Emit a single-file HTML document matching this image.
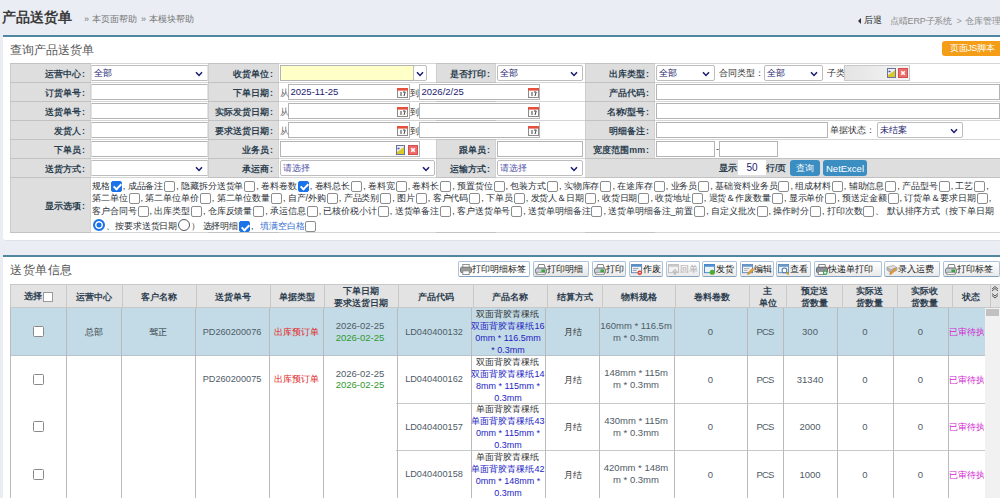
<!DOCTYPE html><html><head><meta charset="utf-8"><style>
html,body{margin:0;padding:0}
body{width:1000px;height:498px;overflow:hidden;position:relative;background:#eaedf3;font-family:"Liberation Sans",sans-serif;font-size:9px;color:#333}
.t{position:absolute;white-space:nowrap;line-height:1.2}
.c{position:absolute;display:flex;align-items:center;white-space:nowrap;box-sizing:border-box}
.sel{position:absolute;border:1px solid #bdbdbd;border-radius:2px;background:#fff;display:flex;align-items:center;padding-left:1.5px;box-sizing:content-box;font-size:9px;white-space:nowrap}
.sel i{position:absolute;right:4.5px;top:5px;line-height:0}
.sel span{position:relative;top:0.5px}
.inp{position:absolute;border:1px solid #b4b4b4;display:flex;align-items:center;padding-left:1.5px;font-size:9.5px;color:#1a1a6e;box-sizing:content-box;white-space:nowrap}
.cb{display:inline-block;width:11px;height:11px;border:1px solid #8c8c8c;border-radius:2px;background:#fff;vertical-align:-3px;margin:0 1px;box-sizing:border-box}
.cb.on{background:#1a73e8;border-color:#1a73e8;position:relative}
.cb.on:after{content:"";position:absolute;left:3px;top:0.5px;width:3px;height:6px;border:solid #fff;border-width:0 2px 2px 0;transform:rotate(45deg)}
.rd{display:inline-block;width:12px;height:12px;border:1px solid #555;border-radius:50%;background:#fff;vertical-align:-2px;margin:0 1px;box-sizing:border-box}
.rd.on{border:2px solid #1a73e8;box-shadow:inset 0 0 0 1.5px #fff;background:#1a73e8}
.btn{position:absolute;border:1px solid #adc3d8;border-bottom-color:#85a2bd;border-radius:2px;display:flex;align-items:center;font-size:8.7px;white-space:nowrap;padding-left:1px;box-sizing:content-box;overflow:visible}
.bi{display:inline-block;width:12px;height:10px;background:#7a9ab8;border-radius:1px;margin-right:2px}
</style></head><body>
<div class="t" style="left:2px;top:9px;font-size:14px;color:#3c3c3c;font-weight:bold;">产品送货单</div>
<div class="t" style="left:84px;top:14px;font-size:9px;color:#777;">&raquo; 本页面帮助</div>
<div class="t" style="left:141px;top:14px;font-size:9px;color:#777;">&raquo; 本模块帮助</div>
<div style="position:absolute;left:858px;top:18px;width:0;height:0;border-top:3px solid transparent;border-bottom:3px solid transparent;border-right:3px solid #333"></div>
<div class="t" style="left:864px;top:15px;font-size:9px;color:#222;">后退</div>
<div class="t" style="left:890px;top:15.5px;font-size:9px;color:#888;letter-spacing:-0.2px">点晴ERP子系统</div>
<div class="t" style="left:956.5px;top:15.5px;font-size:9px;color:#999;">&gt;</div>
<div class="t" style="left:964.5px;top:15.5px;font-size:9px;color:#888;">仓库管理</div>
<div style="position:absolute;left:3px;top:35px;width:1000px;height:205px;background:#fff;border-top:2px solid #4e879f;box-sizing:border-box;border-radius:0 0 3px 3px"></div>
<div style="position:absolute;left:5px;top:240px;width:995px;height:1px;background:#dfe2e7"></div>
<div class="t" style="left:10px;top:43px;font-size:12px;color:#555;">查询产品送货单</div>
<div class="c" style="left:942px;top:41px;width:62px;height:15px;background:#f39e16;border-radius:3px;color:#fff;font-size:9px;letter-spacing:-0.4px;justify-content:flex-start;padding-left:8px;box-sizing:border-box"><div>页面JS脚本</div></div>
<div style="position:absolute;left:10px;top:63px;width:990px;height:170px;background:#fff"></div>
<div style="position:absolute;left:10px;top:63px;width:81px;height:19px;background:#dedede;box-shadow:inset 1px 0 #cdcdcd, inset -1px 0 #d2d2d2"></div>
<div class="c" style="left:10px;top:63px;width:75px;height:19px;justify-content:flex-end;font-size:8.85px;color:#2c3e50;font-weight:bold;"><div style="position:relative;top:2px">运营中心<span style="margin-left:1px">:</span></div></div>
<div style="position:absolute;left:208px;top:63px;width:71px;height:19px;background:#dedede;box-shadow:inset 1px 0 #cdcdcd, inset -1px 0 #d2d2d2"></div>
<div class="c" style="left:208px;top:63px;width:65px;height:19px;justify-content:flex-end;font-size:8.85px;color:#2c3e50;font-weight:bold;"><div style="position:relative;top:2px">收货单位<span style="margin-left:1px">:</span></div></div>
<div style="position:absolute;left:436px;top:63px;width:60px;height:19px;background:#dedede;box-shadow:inset 1px 0 #cdcdcd, inset -1px 0 #d2d2d2"></div>
<div class="c" style="left:436px;top:63px;width:54px;height:19px;justify-content:flex-end;font-size:8.85px;color:#2c3e50;font-weight:bold;"><div style="position:relative;top:2px">是否打印<span style="margin-left:1px">:</span></div></div>
<div style="position:absolute;left:585px;top:63px;width:70px;height:19px;background:#dedede;box-shadow:inset 1px 0 #cdcdcd, inset -1px 0 #d2d2d2"></div>
<div class="c" style="left:585px;top:63px;width:64px;height:19px;justify-content:flex-end;font-size:8.85px;color:#2c3e50;font-weight:bold;"><div style="position:relative;top:2px">出库类型<span style="margin-left:1px">:</span></div></div>
<div style="position:absolute;left:10px;top:82px;width:81px;height:19px;background:#dedede;box-shadow:inset 1px 0 #cdcdcd, inset -1px 0 #d2d2d2"></div>
<div class="c" style="left:10px;top:82px;width:75px;height:19px;justify-content:flex-end;font-size:8.85px;color:#2c3e50;font-weight:bold;"><div style="position:relative;top:2px">订货单号<span style="margin-left:1px">:</span></div></div>
<div style="position:absolute;left:208px;top:82px;width:71px;height:19px;background:#dedede;box-shadow:inset 1px 0 #cdcdcd, inset -1px 0 #d2d2d2"></div>
<div class="c" style="left:208px;top:82px;width:65px;height:19px;justify-content:flex-end;font-size:8.85px;color:#2c3e50;font-weight:bold;"><div style="position:relative;top:2px">下单日期<span style="margin-left:1px">:</span></div></div>
<div style="position:absolute;left:585px;top:82px;width:70px;height:19px;background:#dedede;box-shadow:inset 1px 0 #cdcdcd, inset -1px 0 #d2d2d2"></div>
<div class="c" style="left:585px;top:82px;width:64px;height:19px;justify-content:flex-end;font-size:8.85px;color:#2c3e50;font-weight:bold;"><div style="position:relative;top:2px">产品代码<span style="margin-left:1px">:</span></div></div>
<div style="position:absolute;left:10px;top:101px;width:81px;height:19px;background:#dedede;box-shadow:inset 1px 0 #cdcdcd, inset -1px 0 #d2d2d2"></div>
<div class="c" style="left:10px;top:101px;width:75px;height:19px;justify-content:flex-end;font-size:8.85px;color:#2c3e50;font-weight:bold;"><div style="position:relative;top:2px">送货单号<span style="margin-left:1px">:</span></div></div>
<div style="position:absolute;left:208px;top:101px;width:71px;height:19px;background:#dedede;box-shadow:inset 1px 0 #cdcdcd, inset -1px 0 #d2d2d2"></div>
<div class="c" style="left:208px;top:101px;width:65px;height:19px;justify-content:flex-end;font-size:8.85px;color:#2c3e50;font-weight:bold;"><div style="position:relative;top:2px">实际发货日期<span style="margin-left:1px">:</span></div></div>
<div style="position:absolute;left:585px;top:101px;width:70px;height:19px;background:#dedede;box-shadow:inset 1px 0 #cdcdcd, inset -1px 0 #d2d2d2"></div>
<div class="c" style="left:585px;top:101px;width:64px;height:19px;justify-content:flex-end;font-size:8.85px;color:#2c3e50;font-weight:bold;"><div style="position:relative;top:2px">名称/型号<span style="margin-left:1px">:</span></div></div>
<div style="position:absolute;left:10px;top:120px;width:81px;height:19px;background:#dedede;box-shadow:inset 1px 0 #cdcdcd, inset -1px 0 #d2d2d2"></div>
<div class="c" style="left:10px;top:120px;width:75px;height:19px;justify-content:flex-end;font-size:8.85px;color:#2c3e50;font-weight:bold;"><div style="position:relative;top:2px">发货人<span style="margin-left:1px">:</span></div></div>
<div style="position:absolute;left:208px;top:120px;width:71px;height:19px;background:#dedede;box-shadow:inset 1px 0 #cdcdcd, inset -1px 0 #d2d2d2"></div>
<div class="c" style="left:208px;top:120px;width:65px;height:19px;justify-content:flex-end;font-size:8.85px;color:#2c3e50;font-weight:bold;"><div style="position:relative;top:2px">要求送货日期<span style="margin-left:1px">:</span></div></div>
<div style="position:absolute;left:585px;top:120px;width:70px;height:19px;background:#dedede;box-shadow:inset 1px 0 #cdcdcd, inset -1px 0 #d2d2d2"></div>
<div class="c" style="left:585px;top:120px;width:64px;height:19px;justify-content:flex-end;font-size:8.85px;color:#2c3e50;font-weight:bold;"><div style="position:relative;top:2px">明细备注<span style="margin-left:1px">:</span></div></div>
<div style="position:absolute;left:10px;top:139px;width:81px;height:19px;background:#dedede;box-shadow:inset 1px 0 #cdcdcd, inset -1px 0 #d2d2d2"></div>
<div class="c" style="left:10px;top:139px;width:75px;height:19px;justify-content:flex-end;font-size:8.85px;color:#2c3e50;font-weight:bold;"><div style="position:relative;top:2px">下单员<span style="margin-left:1px">:</span></div></div>
<div style="position:absolute;left:208px;top:139px;width:71px;height:19px;background:#dedede;box-shadow:inset 1px 0 #cdcdcd, inset -1px 0 #d2d2d2"></div>
<div class="c" style="left:208px;top:139px;width:65px;height:19px;justify-content:flex-end;font-size:8.85px;color:#2c3e50;font-weight:bold;"><div style="position:relative;top:2px">业务员<span style="margin-left:1px">:</span></div></div>
<div style="position:absolute;left:436px;top:139px;width:60px;height:19px;background:#dedede;box-shadow:inset 1px 0 #cdcdcd, inset -1px 0 #d2d2d2"></div>
<div class="c" style="left:436px;top:139px;width:54px;height:19px;justify-content:flex-end;font-size:8.85px;color:#2c3e50;font-weight:bold;"><div style="position:relative;top:2px">跟单员<span style="margin-left:1px">:</span></div></div>
<div style="position:absolute;left:585px;top:139px;width:70px;height:19px;background:#dedede;box-shadow:inset 1px 0 #cdcdcd, inset -1px 0 #d2d2d2"></div>
<div class="c" style="left:585px;top:139px;width:64px;height:19px;justify-content:flex-end;font-size:8.85px;color:#2c3e50;font-weight:bold;"><div style="position:relative;top:2px">宽度范围mm<span style="margin-left:1px">:</span></div></div>
<div style="position:absolute;left:10px;top:158px;width:81px;height:19px;background:#dedede;box-shadow:inset 1px 0 #cdcdcd, inset -1px 0 #d2d2d2"></div>
<div class="c" style="left:10px;top:158px;width:75px;height:19px;justify-content:flex-end;font-size:8.85px;color:#2c3e50;font-weight:bold;"><div style="position:relative;top:2px">送货方式<span style="margin-left:1px">:</span></div></div>
<div style="position:absolute;left:208px;top:158px;width:71px;height:19px;background:#dedede;box-shadow:inset 1px 0 #cdcdcd, inset -1px 0 #d2d2d2"></div>
<div class="c" style="left:208px;top:158px;width:65px;height:19px;justify-content:flex-end;font-size:8.85px;color:#2c3e50;font-weight:bold;"><div style="position:relative;top:2px">承运商<span style="margin-left:1px">:</span></div></div>
<div style="position:absolute;left:436px;top:158px;width:60px;height:19px;background:#dedede;box-shadow:inset 1px 0 #cdcdcd, inset -1px 0 #d2d2d2"></div>
<div class="c" style="left:436px;top:158px;width:54px;height:19px;justify-content:flex-end;font-size:8.85px;color:#2c3e50;font-weight:bold;"><div style="position:relative;top:2px">运输方式<span style="margin-left:1px">:</span></div></div>
<div style="position:absolute;left:10px;top:177px;width:81px;height:55px;background:#dedede;box-shadow:inset 1px 0 #cdcdcd, inset -1px 0 #d2d2d2"></div>
<div class="c" style="left:10px;top:177px;width:75px;height:55px;justify-content:flex-end;font-size:8.85px;color:#2c3e50;font-weight:bold;"><div style="position:relative;top:2px">显示选项<span style="margin-left:1px">:</span></div></div>
<div style="position:absolute;left:585px;top:158px;width:415px;height:19px;background:#dedede"></div>
<div style="position:absolute;left:10px;top:63px;width:990px;height:1px;background:#d6d6d6"></div>
<div style="position:absolute;left:10px;top:82px;width:990px;height:1px;background:#d6d6d6"></div>
<div style="position:absolute;left:10px;top:101px;width:990px;height:1px;background:#d6d6d6"></div>
<div style="position:absolute;left:10px;top:120px;width:990px;height:1px;background:#d6d6d6"></div>
<div style="position:absolute;left:10px;top:139px;width:990px;height:1px;background:#d6d6d6"></div>
<div style="position:absolute;left:10px;top:158px;width:990px;height:1px;background:#d6d6d6"></div>
<div style="position:absolute;left:10px;top:177px;width:990px;height:1px;background:#d6d6d6"></div>
<div style="position:absolute;left:10px;top:232px;width:990px;height:1px;background:#d6d6d6"></div>
<div style="position:absolute;left:10px;top:63px;width:81px;height:1px;background:#c2c2c2"></div>
<div style="position:absolute;left:208px;top:63px;width:71px;height:1px;background:#c2c2c2"></div>
<div style="position:absolute;left:436px;top:63px;width:60px;height:1px;background:#c2c2c2"></div>
<div style="position:absolute;left:585px;top:63px;width:70px;height:1px;background:#c2c2c2"></div>
<div style="position:absolute;left:10px;top:82px;width:81px;height:1px;background:#c2c2c2"></div>
<div style="position:absolute;left:208px;top:82px;width:71px;height:1px;background:#c2c2c2"></div>
<div style="position:absolute;left:436px;top:82px;width:60px;height:1px;background:#c2c2c2"></div>
<div style="position:absolute;left:585px;top:82px;width:70px;height:1px;background:#c2c2c2"></div>
<div style="position:absolute;left:10px;top:101px;width:81px;height:1px;background:#c2c2c2"></div>
<div style="position:absolute;left:208px;top:101px;width:71px;height:1px;background:#c2c2c2"></div>
<div style="position:absolute;left:436px;top:101px;width:60px;height:1px;background:#c2c2c2"></div>
<div style="position:absolute;left:585px;top:101px;width:70px;height:1px;background:#c2c2c2"></div>
<div style="position:absolute;left:10px;top:120px;width:81px;height:1px;background:#c2c2c2"></div>
<div style="position:absolute;left:208px;top:120px;width:71px;height:1px;background:#c2c2c2"></div>
<div style="position:absolute;left:436px;top:120px;width:60px;height:1px;background:#c2c2c2"></div>
<div style="position:absolute;left:585px;top:120px;width:70px;height:1px;background:#c2c2c2"></div>
<div style="position:absolute;left:10px;top:139px;width:81px;height:1px;background:#c2c2c2"></div>
<div style="position:absolute;left:208px;top:139px;width:71px;height:1px;background:#c2c2c2"></div>
<div style="position:absolute;left:436px;top:139px;width:60px;height:1px;background:#c2c2c2"></div>
<div style="position:absolute;left:585px;top:139px;width:70px;height:1px;background:#c2c2c2"></div>
<div style="position:absolute;left:10px;top:158px;width:81px;height:1px;background:#c2c2c2"></div>
<div style="position:absolute;left:208px;top:158px;width:71px;height:1px;background:#c2c2c2"></div>
<div style="position:absolute;left:436px;top:158px;width:60px;height:1px;background:#c2c2c2"></div>
<div style="position:absolute;left:585px;top:158px;width:70px;height:1px;background:#c2c2c2"></div>
<div style="position:absolute;left:10px;top:177px;width:81px;height:1px;background:#c2c2c2"></div>
<div style="position:absolute;left:208px;top:177px;width:71px;height:1px;background:#c2c2c2"></div>
<div style="position:absolute;left:436px;top:177px;width:60px;height:1px;background:#c2c2c2"></div>
<div style="position:absolute;left:585px;top:177px;width:70px;height:1px;background:#c2c2c2"></div>
<div style="position:absolute;left:10px;top:232px;width:81px;height:1px;background:#c2c2c2"></div>
<div style="position:absolute;left:208px;top:232px;width:71px;height:1px;background:#c2c2c2"></div>
<div style="position:absolute;left:436px;top:232px;width:60px;height:1px;background:#c2c2c2"></div>
<div style="position:absolute;left:585px;top:232px;width:70px;height:1px;background:#c2c2c2"></div>
<div style="position:absolute;left:586px;top:158px;width:414px;height:1px;background:#c2c2c2"></div>
<div style="position:absolute;left:586px;top:177px;width:414px;height:1px;background:#c2c2c2"></div>
<div class="sel" style="left:91px;top:65px;width:113.5px;height:14px;border-left-color:#e2e2e2;border-right-color:#e2e2e2;border-radius:0"><span style="color:#1a1a6e">全部</span><i><svg width="8" height="6" viewBox="0 0 8 6"><path d="M1 1.2 L4 4.4 L7 1.2" fill="none" stroke="#1a1a6e" stroke-width="1.5"/></svg></i></div>
<div class="inp" style="left:280px;top:65px;width:130px;height:14px;background:#ffffc8;"></div>
<div class="sel" style="left:413px;top:65px;width:12px;height:14px;justify-content:center;padding:0"><i style="right:2px"><svg width="8" height="6" viewBox="0 0 8 6"><path d="M1 1.2 L4 4.4 L7 1.2" fill="none" stroke="#1a1a6e" stroke-width="1.5"/></svg></i></div>
<div class="sel" style="left:497px;top:65px;width:82.5px;height:14px;"><span style="color:#1a1a6e">全部</span><i><svg width="8" height="6" viewBox="0 0 8 6"><path d="M1 1.2 L4 4.4 L7 1.2" fill="none" stroke="#1a1a6e" stroke-width="1.5"/></svg></i></div>
<div class="sel" style="left:656px;top:65px;width:55.5px;height:14px;"><span style="color:#1a1a6e">全部</span><i><svg width="8" height="6" viewBox="0 0 8 6"><path d="M1 1.2 L4 4.4 L7 1.2" fill="none" stroke="#1a1a6e" stroke-width="1.5"/></svg></i></div>
<div class="t" style="left:719px;top:68px;font-size:8.85px;color:#333;">合同类型：</div>
<div class="sel" style="left:764px;top:65px;width:55.5px;height:14px;"><span style="color:#1a1a6e">全部</span><i><svg width="8" height="6" viewBox="0 0 8 6"><path d="M1 1.2 L4 4.4 L7 1.2" fill="none" stroke="#1a1a6e" stroke-width="1.5"/></svg></i></div>
<div class="t" style="left:827px;top:68px;font-size:8.85px;color:#333;">子类</div>
<div class="inp" style="left:844px;top:65px;width:62px;height:14px;background:linear-gradient(90deg,#e4e4e4,#f4f4f4);border-color:#c8c8c8"></div>
<div style="position:absolute;left:887px;top:68px;line-height:0"><svg width="9" height="10" viewBox="0 0 9 10"><rect x="0.5" y="0.5" width="8" height="9" fill="#eef0f6" stroke="#6a72a0"/><path d="M1 9 L1 7 L4 5 L8 2 V9Z" fill="#d8c828"/><path d="M1.5 3.5h2" stroke="#4050a0" stroke-width="1.5"/></svg></div>
<div style="position:absolute;left:898px;top:68px;line-height:0"><svg width="10" height="10" viewBox="0 0 10 10"><rect x="0.5" y="0.5" width="9" height="9" fill="#f06a6a" stroke="#d05050"/><path d="M3.2 3.2 L6.8 6.8 M6.8 3.2 L3.2 6.8" stroke="#fff" stroke-width="1.6"/></svg></div>
<div class="inp" style="left:91px;top:84px;width:113px;height:14px;background:#fff;border-left-color:#e2e2e2;border-right-color:#e2e2e2"></div>
<div class="inp" style="left:288px;top:84px;width:118px;height:14px;background:#fff;"><span style="position:relative;top:-0.5px">2025-11-25</span></div>
<div class="t" style="left:279.5px;top:87.5px;font-size:8.5px;color:#666;">从</div>
<div style="position:absolute;left:397px;top:87.5px;line-height:0"><svg width="11" height="10" viewBox="0 0 11 10"><rect x="0.5" y="0.5" width="10" height="9" fill="#fafafa" stroke="#8c8c8c"/><rect x="0" y="0" width="11" height="2.6" fill="#e5503c"/><path d="M4 4v4M6 4h2.2l-1.2 4" fill="none" stroke="#444" stroke-width="1"/></svg></div>
<div class="t" style="left:410px;top:87.5px;font-size:8.5px;color:#333;">到</div>
<div class="inp" style="left:419px;top:84px;width:117px;height:14px;background:#fff;"><span style="position:relative;top:-0.5px">2026/2/25</span></div>
<div style="position:absolute;left:528px;top:87.5px;line-height:0"><svg width="11" height="10" viewBox="0 0 11 10"><rect x="0.5" y="0.5" width="10" height="9" fill="#fafafa" stroke="#8c8c8c"/><rect x="0" y="0" width="11" height="2.6" fill="#e5503c"/><path d="M4 4v4M6 4h2.2l-1.2 4" fill="none" stroke="#444" stroke-width="1"/></svg></div>
<div class="inp" style="left:656px;top:84px;width:340px;height:14px;background:#fff;"></div>
<div class="inp" style="left:91px;top:103px;width:113px;height:14px;background:#fff;border-left-color:#e2e2e2;border-right-color:#e2e2e2"></div>
<div class="inp" style="left:288px;top:103px;width:118px;height:14px;background:#fff;"><span style="position:relative;top:-0.5px"></span></div>
<div class="t" style="left:279.5px;top:106.5px;font-size:8.5px;color:#666;">从</div>
<div style="position:absolute;left:397px;top:106.5px;line-height:0"><svg width="11" height="10" viewBox="0 0 11 10"><rect x="0.5" y="0.5" width="10" height="9" fill="#fafafa" stroke="#8c8c8c"/><rect x="0" y="0" width="11" height="2.6" fill="#e5503c"/><path d="M4 4v4M6 4h2.2l-1.2 4" fill="none" stroke="#444" stroke-width="1"/></svg></div>
<div class="t" style="left:410px;top:106.5px;font-size:8.5px;color:#333;">到</div>
<div class="inp" style="left:419px;top:103px;width:117px;height:14px;background:#fff;"><span style="position:relative;top:-0.5px"></span></div>
<div style="position:absolute;left:528px;top:106.5px;line-height:0"><svg width="11" height="10" viewBox="0 0 11 10"><rect x="0.5" y="0.5" width="10" height="9" fill="#fafafa" stroke="#8c8c8c"/><rect x="0" y="0" width="11" height="2.6" fill="#e5503c"/><path d="M4 4v4M6 4h2.2l-1.2 4" fill="none" stroke="#444" stroke-width="1"/></svg></div>
<div class="inp" style="left:656px;top:103px;width:340px;height:14px;background:#fff;"></div>
<div class="inp" style="left:91px;top:122px;width:113px;height:14px;background:#fff;border-left-color:#e2e2e2;border-right-color:#e2e2e2"></div>
<div class="inp" style="left:288px;top:122px;width:118px;height:14px;background:#fff;"><span style="position:relative;top:-0.5px"></span></div>
<div class="t" style="left:279.5px;top:125.5px;font-size:8.5px;color:#666;">从</div>
<div style="position:absolute;left:397px;top:125.5px;line-height:0"><svg width="11" height="10" viewBox="0 0 11 10"><rect x="0.5" y="0.5" width="10" height="9" fill="#fafafa" stroke="#8c8c8c"/><rect x="0" y="0" width="11" height="2.6" fill="#e5503c"/><path d="M4 4v4M6 4h2.2l-1.2 4" fill="none" stroke="#444" stroke-width="1"/></svg></div>
<div class="t" style="left:410px;top:125.5px;font-size:8.5px;color:#333;">到</div>
<div class="inp" style="left:419px;top:122px;width:117px;height:14px;background:#fff;"><span style="position:relative;top:-0.5px"></span></div>
<div style="position:absolute;left:528px;top:125.5px;line-height:0"><svg width="11" height="10" viewBox="0 0 11 10"><rect x="0.5" y="0.5" width="10" height="9" fill="#fafafa" stroke="#8c8c8c"/><rect x="0" y="0" width="11" height="2.6" fill="#e5503c"/><path d="M4 4v4M6 4h2.2l-1.2 4" fill="none" stroke="#444" stroke-width="1"/></svg></div>
<div class="inp" style="left:656px;top:122px;width:168px;height:14px;background:#fff;"></div>
<div class="t" style="left:830px;top:125px;font-size:8.85px;color:#333;">单据状态：</div>
<div class="sel" style="left:877px;top:122px;width:82.5px;height:14px;"><span style="color:#1a1a6e">未结案</span><i><svg width="8" height="6" viewBox="0 0 8 6"><path d="M1 1.2 L4 4.4 L7 1.2" fill="none" stroke="#1a1a6e" stroke-width="1.5"/></svg></i></div>
<div class="inp" style="left:91px;top:141px;width:113px;height:14px;background:#fff;border-left-color:#e2e2e2;border-right-color:#e2e2e2"></div>
<div class="inp" style="left:280px;top:141px;width:136px;height:14px;background:#fff;"></div>
<div style="position:absolute;left:395.5px;top:145px;line-height:0"><svg width="9" height="10" viewBox="0 0 9 10"><rect x="0.5" y="0.5" width="8" height="9" fill="#eef0f6" stroke="#6a72a0"/><path d="M1 9 L1 7 L4 5 L8 2 V9Z" fill="#d8c828"/><path d="M1.5 3.5h2" stroke="#4050a0" stroke-width="1.5"/></svg></div>
<div style="position:absolute;left:408px;top:145px;line-height:0"><svg width="10" height="10" viewBox="0 0 10 10"><rect x="0.5" y="0.5" width="9" height="9" fill="#f06a6a" stroke="#d05050"/><path d="M3.2 3.2 L6.8 6.8 M6.8 3.2 L3.2 6.8" stroke="#fff" stroke-width="1.6"/></svg></div>
<div class="inp" style="left:497px;top:141px;width:82px;height:14px;background:#fff;"></div>
<div class="inp" style="left:656px;top:141px;width:55px;height:14px;background:#fff;"></div>
<div class="t" style="left:716px;top:143.5px;font-size:9px;color:#333;">-</div>
<div class="inp" style="left:719px;top:141px;width:55px;height:14px;background:#fff;"></div>
<div class="sel" style="left:91px;top:160px;width:113.5px;height:14px;border-left-color:#e2e2e2;border-right-color:#e2e2e2;border-radius:0"><span style="color:#1a1a6e"></span><i><svg width="8" height="6" viewBox="0 0 8 6"><path d="M1 1.2 L4 4.4 L7 1.2" fill="none" stroke="#1a1a6e" stroke-width="1.5"/></svg></i></div>
<div class="sel" style="left:280px;top:160px;width:151.5px;height:14px;"><span style="color:#5555aa">请选择</span><i><svg width="8" height="6" viewBox="0 0 8 6"><path d="M1 1.2 L4 4.4 L7 1.2" fill="none" stroke="#1a1a6e" stroke-width="1.5"/></svg></i></div>
<div class="sel" style="left:497px;top:160px;width:82.5px;height:14px;"><span style="color:#5555aa">请选择</span><i><svg width="8" height="6" viewBox="0 0 8 6"><path d="M1 1.2 L4 4.4 L7 1.2" fill="none" stroke="#1a1a6e" stroke-width="1.5"/></svg></i></div>
<div class="t" style="left:719px;top:163px;font-size:8.85px;color:#2c3e50;font-weight:bold;">显示</div>
<div class="c" style="left:738px;top:160px;width:28px;height:15px;background:#fff;justify-content:center;color:#1a1a6e;font-size:10px"><div>50</div></div>
<div class="t" style="left:766px;top:163px;font-size:8.85px;color:#2c3e50;font-weight:bold;">行/页</div>
<div class="c" style="left:790px;top:160px;width:30px;height:16px;background:#3b8ec2;border-radius:3px;color:#fff;font-size:9px;justify-content:center"><div>查询</div></div>
<div class="c" style="left:823px;top:160px;width:44px;height:16px;background:#3b8ec2;border-radius:3px;color:#fff;font-size:9.5px;justify-content:center"><div>NetExcel</div></div>
<div class="t" style="left:92px;top:180.5px;font-size:9px;color:#2a2f36;letter-spacing:-0.1px">规格<b class="cb on"></b>, 成品备注<b class="cb"></b>, 隐藏拆分送货单<b class="cb"></b>, 卷料卷数<b class="cb on"></b>, 卷料总长<b class="cb"></b>, 卷料宽<b class="cb"></b>, 卷料长<b class="cb"></b>, 预置货位<b class="cb"></b>, 包装方式<b class="cb"></b>, 实物库存<b class="cb"></b>, 在途库存<b class="cb"></b>, 业务员<b class="cb"></b>, 基础资料业务员<b class="cb"></b>, 组成材料<b class="cb"></b>, 辅助信息<b class="cb"></b>, 产品型号<b class="cb"></b>, 工艺<b class="cb"></b>,</div>
<div class="t" style="left:92px;top:193px;font-size:9px;color:#2a2f36;letter-spacing:-0.1px">第二单位<b class="cb"></b>, 第二单位单价<b class="cb"></b>, 第二单位数量<b class="cb"></b>, 自产/外购<b class="cb"></b>, 产品类别<b class="cb"></b>, 图片<b class="cb"></b>, 客户代码<b class="cb"></b>, 下单员<b class="cb"></b>, 发货人＆日期<b class="cb"></b>, 收货日期<b class="cb"></b>, 收货地址<b class="cb"></b>, 退货＆作废数量<b class="cb"></b>, 显示单价<b class="cb"></b>, 预送定金额<b class="cb"></b>, 订货单＆要求日期<b class="cb"></b>,</div>
<div class="t" style="left:92px;top:206px;font-size:9px;color:#2a2f36;letter-spacing:-0.1px">客户合同号<b class="cb"></b>, 出库类型<b class="cb"></b>, 仓库反馈量<b class="cb"></b>, 承运信息<b class="cb"></b>, 已核价税小计<b class="cb"></b>, 送货单备注<b class="cb"></b>, 客户送货单号<b class="cb"></b>, 送货单明细备注<b class="cb"></b>, 送货单明细备注_前置<b class="cb"></b>, 自定义批次<b class="cb"></b>, 操作时分<b class="cb"></b>, 打印次数<b class="cb"></b>、 默认排序方式（按下单日期</div>
<div class="t" style="left:92px;top:219px;font-size:9px;color:#2a2f36;letter-spacing:-0.1px"><b class="rd on"></b>、按要求送货日期<b class="rd"></b>） 选择明细<b class="cb on"></b>, <span style="color:#3a6fd0;margin-left:4px">填满空白格</span><b class="cb"></b></div>
<div style="position:absolute;left:3px;top:255px;width:1000px;height:250px;background:#fff;border-top:2px solid #4e879f;box-sizing:border-box"></div>
<div class="t" style="left:10px;top:263px;font-size:12px;color:#555;letter-spacing:0.5px">送货单信息</div>
<div class="btn" style="left:458px;top:261px;width:69px;height:14px;color:#151515;background:linear-gradient(#fff,#fff)"><svg width="12" height="11" viewBox="0 0 13 12" style="flex:none;margin-right:0"><rect x="3" y="0.5" width="7" height="4" fill="#fff" stroke="#8a8a8a"/><rect x="0.5" y="3.5" width="12" height="6" rx="1.5" fill="#9a9a9a" stroke="#6e6e6e"/><rect x="3" y="7.5" width="7" height="4" fill="#fff" stroke="#8a8a8a"/></svg><span style="position:relative;top:0.5px">打印明细标签</span></div>
<div class="btn" style="left:532.5px;top:261px;width:53.5px;height:14px;color:#151515;background:linear-gradient(#fff,#e4e4e4)"><svg width="12" height="11" viewBox="0 0 13 12" style="flex:none;margin-right:0"><path d="M4 0.5h6l1 4h-8z" fill="#fff" stroke="#777"/><rect x="0.5" y="4.5" width="12" height="6" rx="2" fill="#c9ced6" stroke="#6f7680"/><rect x="2" y="9" width="9" height="2.5" fill="#f4f4f4" stroke="#888" stroke-width="0.8"/><rect x="7" y="6" width="4" height="3" fill="#3aa53a"/></svg><span style="position:relative;top:0.5px">打印明细</span></div>
<div class="btn" style="left:592px;top:261px;width:31px;height:14px;color:#151515;background:linear-gradient(#fff,#e9e9e9)"><svg width="12" height="11" viewBox="0 0 13 12" style="flex:none;margin-right:0"><path d="M4 0.5h6l1 4h-8z" fill="#fff" stroke="#777"/><rect x="0.5" y="4.5" width="12" height="6" rx="2" fill="#c9ced6" stroke="#6f7680"/><rect x="2" y="9" width="9" height="2.5" fill="#f4f4f4" stroke="#888" stroke-width="0.8"/><rect x="7" y="6" width="4" height="3" fill="#3aa53a"/></svg><span style="position:relative;top:0.5px">打印</span></div>
<div class="btn" style="left:628.5px;top:261px;width:31.5px;height:14px;color:#151515;background:linear-gradient(#fff,#e9e9e9)"><svg width="12" height="11" viewBox="0 0 13 12" style="flex:none;margin-right:0"><rect x="0.5" y="0.5" width="11" height="9" fill="#eef3f8" stroke="#5a86b5"/><rect x="0.5" y="0.5" width="11" height="2.5" fill="#5a8fc8"/><path d="M2 5h6M2 7h4" stroke="#999"/><circle cx="9.5" cy="9.5" r="2.5" fill="#e23b2e"/><path d="M8.3 9.5h2.4" stroke="#fff"/></svg><span style="position:relative;top:0.5px">作废</span></div>
<div class="btn" style="left:666px;top:261px;width:31px;height:14px;color:#aaa;background:linear-gradient(#fff,#e9e9e9)"><svg width="12" height="11" viewBox="0 0 13 12" style="flex:none;margin-right:0"><rect x="0.5" y="0.5" width="11" height="9" fill="#f2f2f2" stroke="#bbb"/><rect x="0.5" y="0.5" width="11" height="2.5" fill="#c8c8c8"/><path d="M7 11.5v-3h-2l2.5-3 2.5 3h-2v3z" fill="#ddd" stroke="#aaa" stroke-width="0.7"/></svg><span style="position:relative;top:0.5px">回单</span></div>
<div class="btn" style="left:702px;top:261px;width:32px;height:14px;color:#151515;background:linear-gradient(#fff,#e9e9e9)"><svg width="12" height="11" viewBox="0 0 13 12" style="flex:none;margin-right:0"><rect x="0.5" y="0.5" width="11" height="9" fill="#eaf2fa" stroke="#3f7fc0"/><rect x="0.5" y="0.5" width="11" height="2.5" fill="#4d8fd0"/><circle cx="9" cy="9" r="2.8" fill="#4cad2e"/></svg><span style="position:relative;top:0.5px">发货</span></div>
<div class="btn" style="left:740px;top:261px;width:31px;height:14px;color:#151515;background:linear-gradient(#fff,#e9e9e9)"><svg width="12" height="11" viewBox="0 0 13 12" style="flex:none;margin-right:0"><rect x="0.5" y="0.5" width="11" height="9" fill="#eef3f8" stroke="#5a86b5"/><rect x="0.5" y="0.5" width="11" height="2.5" fill="#6a98c8"/><path d="M2 5h6M2 7h4" stroke="#aaa"/><path d="M6 11.5l1-2.5 4.5-4.5 1.5 1.5-4.5 4.5z" fill="#f0a030" stroke="#b0701a" stroke-width="0.6"/></svg><span style="position:relative;top:0.5px">编辑</span></div>
<div class="btn" style="left:776px;top:261px;width:32px;height:14px;color:#151515;background:linear-gradient(#fff,#e9e9e9)"><svg width="12" height="11" viewBox="0 0 13 12" style="flex:none;margin-right:0"><rect x="0.5" y="0.5" width="11" height="9" fill="#eef3f8" stroke="#5a86b5"/><rect x="0.5" y="0.5" width="11" height="2.5" fill="#6a98c8"/><circle cx="7" cy="7" r="2.6" fill="#fff" stroke="#4a7ab0" stroke-width="1.1"/><path d="M9 9l2.5 2.5" stroke="#d08a20" stroke-width="1.6"/></svg><span style="position:relative;top:0.5px">查看</span></div>
<div class="btn" style="left:813.5px;top:261px;width:65.5px;height:14px;color:#151515;background:linear-gradient(#fff,#e9e9e9)"><svg width="12" height="11" viewBox="0 0 13 12" style="flex:none;margin-right:0"><path d="M3 0.5h7v3.5h-7z" fill="#fff" stroke="#777"/><rect x="0.5" y="3.5" width="12" height="6" rx="1.5" fill="#8c9199" stroke="#5d636b"/><rect x="2.5" y="8" width="6" height="3.5" fill="#fff" stroke="#888"/><circle cx="10" cy="9.5" r="2.5" fill="#2fa84f"/><path d="M8.6 9.5h2.8M10 8.1v2.8" stroke="#fff" stroke-width="1"/></svg><span style="position:relative;top:0.5px">快递单打印</span></div>
<div class="btn" style="left:884px;top:261px;width:53px;height:14px;color:#151515;background:linear-gradient(#fff,#e9e9e9)"><svg width="12" height="11" viewBox="0 0 13 12" style="flex:none;margin-right:0"><path d="M1 3.5 L8 1.5 L12 4 L5 7z" fill="#ddd" stroke="#999" stroke-width="0.7"/><path d="M1 3.5v3l4 3v-3z" fill="#bbb" stroke="#999" stroke-width="0.7"/><path d="M5 9.5v-3l7-2.5v3z" fill="#ccc" stroke="#999" stroke-width="0.7"/><path d="M4 11.5l1-2.5 4.5-4.5 1.5 1.5-4.5 4.5z" fill="#f0a030" stroke="#b0701a" stroke-width="0.6"/></svg><span style="position:relative;top:0.5px">录入运费</span></div>
<div class="btn" style="left:943px;top:261px;width:54px;height:14px;color:#151515;background:linear-gradient(#fff,#e9e9e9)"><svg width="12" height="11" viewBox="0 0 13 12" style="flex:none;margin-right:0"><path d="M4 0.5h6l1 4h-8z" fill="#fff" stroke="#777"/><rect x="0.5" y="4.5" width="12" height="6" rx="2" fill="#c9ced6" stroke="#6f7680"/><rect x="2" y="9" width="9" height="2.5" fill="#f4f4f4" stroke="#888" stroke-width="0.8"/><rect x="7" y="6" width="4" height="3" fill="#3aa53a"/></svg><span style="position:relative;top:0.5px">打印标签</span></div>
<div style="position:absolute;left:10px;top:284px;width:990px;height:24px;background:#e3e3e3"></div>
<div class="c" style="left:10px;top:284px;width:56px;height:24px;justify-content:center;font-size:9px;color:#2c3e50;font-weight:bold;"><div style="text-align:center;line-height:12px;position:relative;top:1px"></div></div>
<div style="position:absolute;left:10px;top:284px;width:1px;height:24px;background:#c8c8c8"></div>
<div class="c" style="left:66px;top:284px;width:56px;height:24px;justify-content:center;font-size:9px;color:#2c3e50;font-weight:bold;"><div style="text-align:center;line-height:12px;position:relative;top:1px">运营中心</div></div>
<div style="position:absolute;left:66px;top:284px;width:1px;height:24px;background:#c8c8c8"></div>
<div class="c" style="left:122px;top:284px;width:74px;height:24px;justify-content:center;font-size:9px;color:#2c3e50;font-weight:bold;"><div style="text-align:center;line-height:12px;position:relative;top:1px">客户名称</div></div>
<div style="position:absolute;left:122px;top:284px;width:1px;height:24px;background:#c8c8c8"></div>
<div class="c" style="left:196px;top:284px;width:74px;height:24px;justify-content:center;font-size:9px;color:#2c3e50;font-weight:bold;"><div style="text-align:center;line-height:12px;position:relative;top:1px">送货单号</div></div>
<div style="position:absolute;left:196px;top:284px;width:1px;height:24px;background:#c8c8c8"></div>
<div class="c" style="left:270px;top:284px;width:54px;height:24px;justify-content:center;font-size:9px;color:#2c3e50;font-weight:bold;"><div style="text-align:center;line-height:12px;position:relative;top:1px">单据类型</div></div>
<div style="position:absolute;left:270px;top:284px;width:1px;height:24px;background:#c8c8c8"></div>
<div class="c" style="left:324px;top:284px;width:74px;height:24px;justify-content:center;font-size:9px;color:#2c3e50;font-weight:bold;"><div style="text-align:center;line-height:12px;position:relative;top:1px">下单日期<br>要求送货日期</div></div>
<div style="position:absolute;left:324px;top:284px;width:1px;height:24px;background:#c8c8c8"></div>
<div class="c" style="left:398px;top:284px;width:75px;height:24px;justify-content:center;font-size:9px;color:#2c3e50;font-weight:bold;"><div style="text-align:center;line-height:12px;position:relative;top:1px">产品代码</div></div>
<div style="position:absolute;left:398px;top:284px;width:1px;height:24px;background:#c8c8c8"></div>
<div class="c" style="left:473px;top:284px;width:74px;height:24px;justify-content:center;font-size:9px;color:#2c3e50;font-weight:bold;"><div style="text-align:center;line-height:12px;position:relative;top:1px">产品名称</div></div>
<div style="position:absolute;left:473px;top:284px;width:1px;height:24px;background:#c8c8c8"></div>
<div class="c" style="left:547px;top:284px;width:55px;height:24px;justify-content:center;font-size:9px;color:#2c3e50;font-weight:bold;"><div style="text-align:center;line-height:12px;position:relative;top:1px">结算方式</div></div>
<div style="position:absolute;left:547px;top:284px;width:1px;height:24px;background:#c8c8c8"></div>
<div class="c" style="left:602px;top:284px;width:73px;height:24px;justify-content:center;font-size:9px;color:#2c3e50;font-weight:bold;"><div style="text-align:center;line-height:12px;position:relative;top:1px">物料规格</div></div>
<div style="position:absolute;left:602px;top:284px;width:1px;height:24px;background:#c8c8c8"></div>
<div class="c" style="left:675px;top:284px;width:74px;height:24px;justify-content:center;font-size:9px;color:#2c3e50;font-weight:bold;"><div style="text-align:center;line-height:12px;position:relative;top:1px">卷料卷数</div></div>
<div style="position:absolute;left:675px;top:284px;width:1px;height:24px;background:#c8c8c8"></div>
<div class="c" style="left:749px;top:284px;width:37px;height:24px;justify-content:center;font-size:9px;color:#2c3e50;font-weight:bold;"><div style="text-align:center;line-height:12px;position:relative;top:1px">主<br>单位</div></div>
<div style="position:absolute;left:749px;top:284px;width:1px;height:24px;background:#c8c8c8"></div>
<div class="c" style="left:786px;top:284px;width:56px;height:24px;justify-content:center;font-size:9px;color:#2c3e50;font-weight:bold;"><div style="text-align:center;line-height:12px;position:relative;top:1px">预定送<br>货数量</div></div>
<div style="position:absolute;left:786px;top:284px;width:1px;height:24px;background:#c8c8c8"></div>
<div class="c" style="left:842px;top:284px;width:55px;height:24px;justify-content:center;font-size:9px;color:#2c3e50;font-weight:bold;"><div style="text-align:center;line-height:12px;position:relative;top:1px">实际送<br>货数量</div></div>
<div style="position:absolute;left:842px;top:284px;width:1px;height:24px;background:#c8c8c8"></div>
<div class="c" style="left:897px;top:284px;width:55px;height:24px;justify-content:center;font-size:9px;color:#2c3e50;font-weight:bold;"><div style="text-align:center;line-height:12px;position:relative;top:1px">实际收<br>货数量</div></div>
<div style="position:absolute;left:897px;top:284px;width:1px;height:24px;background:#c8c8c8"></div>
<div class="c" style="left:952px;top:284px;width:38px;height:24px;justify-content:center;font-size:9px;color:#2c3e50;font-weight:bold;"><div style="text-align:center;line-height:12px;position:relative;top:1px">状态</div></div>
<div style="position:absolute;left:952px;top:284px;width:1px;height:24px;background:#c8c8c8"></div>
<div class="c" style="left:990px;top:284px;width:10px;height:24px;justify-content:center;font-size:9px;color:#2c3e50;font-weight:bold;"><div style="text-align:center;line-height:12px;position:relative;top:1px"></div></div>
<div style="position:absolute;left:990px;top:284px;width:1px;height:24px;background:#c8c8c8"></div>
<div class="t" style="left:24px;top:290.5px;font-size:9px;color:#2c3e50;font-weight:bold;">选择</div>
<div style="position:absolute;left:42.5px;top:291.5px;width:10px;height:10px;background:#fff;border:1px solid #9a9a9a;box-sizing:border-box"></div>
<svg style="position:absolute;left:991px;top:285px" width="8" height="14" viewBox="0 0 8 14"><path d="M1 4L4 1.5L7 4M1 6L4 3.5L7 6M1 8.5L4 11L7 8.5M1 10.5L4 13L7 10.5" fill="none" stroke="#555" stroke-width="1"/></svg>
<div style="position:absolute;left:10px;top:284px;width:990px;height:1px;background:#c8c8c8"></div>
<div style="position:absolute;left:10px;top:307px;width:990px;height:1px;background:#c8c8c8"></div>
<div style="position:absolute;left:10px;top:308px;width:975px;height:47px;background:#c3dbe6"></div>
<div style="position:absolute;left:985px;top:308px;width:15px;height:190px;background:#f1f1f1"></div>
<div style="position:absolute;left:986px;top:309px;width:13px;height:7px;background:#c1c1c1"></div>
<div style="position:absolute;left:10px;top:355px;width:975px;height:1px;background:#b8c4cc"></div>
<div style="position:absolute;left:396px;top:403px;width:589px;height:1px;background:#c8c8c8"></div>
<div style="position:absolute;left:396px;top:450px;width:589px;height:1px;background:#c8c8c8"></div>
<div style="position:absolute;left:10px;top:308px;width:1px;height:190px;background:#bababa"></div>
<div style="position:absolute;left:66px;top:308px;width:1px;height:190px;background:#bababa"></div>
<div style="position:absolute;left:121px;top:308px;width:1px;height:190px;background:#bababa"></div>
<div style="position:absolute;left:195px;top:308px;width:1px;height:190px;background:#bababa"></div>
<div style="position:absolute;left:269px;top:308px;width:1px;height:190px;background:#bababa"></div>
<div style="position:absolute;left:323px;top:308px;width:1px;height:190px;background:#bababa"></div>
<div style="position:absolute;left:397px;top:308px;width:1px;height:190px;background:#bababa"></div>
<div style="position:absolute;left:471px;top:308px;width:1px;height:190px;background:#bababa"></div>
<div style="position:absolute;left:545px;top:308px;width:1px;height:190px;background:#bababa"></div>
<div style="position:absolute;left:599px;top:308px;width:1px;height:190px;background:#bababa"></div>
<div style="position:absolute;left:674px;top:308px;width:1px;height:190px;background:#bababa"></div>
<div style="position:absolute;left:747px;top:308px;width:1px;height:190px;background:#bababa"></div>
<div style="position:absolute;left:783px;top:308px;width:1px;height:190px;background:#bababa"></div>
<div style="position:absolute;left:837px;top:308px;width:1px;height:190px;background:#bababa"></div>
<div style="position:absolute;left:893px;top:308px;width:1px;height:190px;background:#bababa"></div>
<div style="position:absolute;left:948px;top:308px;width:1px;height:190px;background:#bababa"></div>
<b class="cb" style="position:absolute;left:33px;top:326px;width:11px;height:11px;border-color:#8a8a8a;border-radius:1.5px;margin:0"></b>
<div class="c" style="left:195px;top:308px;width:74px;height:47px;justify-content:center;font-size:9.2px;color:#4f5b66;"><div style="">PD260200076</div></div>
<div class="c" style="left:269px;top:308px;width:54px;height:47px;justify-content:center;font-size:8.6px;color:#e02020;"><div style="position:relative;top:1px">出库预订单</div></div>
<div class="c" style="left:323px;top:308px;width:74px;height:47px;justify-content:center;font-size:9.5px;color:#4f5b66;"><div style="text-align:center;line-height:11.5px">2026-02-25<br><span style="color:#2e9a2e">2026-02-25</span></div></div>
<div class="c" style="left:66px;top:308px;width:55px;height:47px;justify-content:center;font-size:9px;color:#3d4650;"><div style="position:relative;top:1px">总部</div></div>
<div class="c" style="left:121px;top:308px;width:74px;height:47px;justify-content:center;font-size:9px;color:#2d3640;"><div style="position:relative;top:1px">驾正</div></div>
<div class="c" style="left:397px;top:308px;width:74px;height:47px;justify-content:center;font-size:9.2px;color:#4f5b66;"><div style="">LD040400132</div></div>
<div class="c" style="left:471px;top:308px;width:74px;height:47px;justify-content:center;font-size:9px;color:#333;"><div style="text-align:center;line-height:11.9px;position:relative;top:1.6px">双面背胶青稞纸<br><span style="color:#2424c4">双面背胶青稞纸16<br>0mm * 116.5mm<br>* 0.3mm</span></div></div>
<div class="c" style="left:545px;top:308px;width:55px;height:47px;justify-content:center;font-size:9px;color:#333;"><div style="position:relative;top:1px">月结</div></div>
<div class="c" style="left:599px;top:308px;width:74px;height:47px;justify-content:center;font-size:9.5px;color:#4f5b66;"><div style="text-align:center;line-height:12px">160mm * 116.5m<br>m * 0.3mm</div></div>
<div class="c" style="left:674px;top:308px;width:73px;height:47px;justify-content:center;font-size:9.5px;color:#4f5b66;"><div style="">0</div></div>
<div class="c" style="left:747px;top:308px;width:36px;height:47px;justify-content:center;font-size:9.5px;color:#4f5b66;letter-spacing:-0.8px"><div style="">PCS</div></div>
<div class="c" style="left:783px;top:308px;width:54px;height:47px;justify-content:center;font-size:9.5px;color:#4f5b66;"><div style="">300</div></div>
<div class="c" style="left:837px;top:308px;width:56px;height:47px;justify-content:center;font-size:9.5px;color:#4f5b66;"><div style="">0</div></div>
<div class="c" style="left:893px;top:308px;width:55px;height:47px;justify-content:center;font-size:9.5px;color:#4f5b66;"><div style="">0</div></div>
<div class="c" style="left:949px;top:308px;width:35px;height:47px;justify-content:flex-start;font-size:8.85px;color:#d22ad2;overflow:hidden"><div style="position:relative;top:1px">已审待执</div></div>
<b class="cb" style="position:absolute;left:33px;top:374px;width:11px;height:11px;border-color:#8a8a8a;border-radius:1.5px;margin:0"></b>
<div class="c" style="left:195px;top:355px;width:74px;height:48px;justify-content:center;font-size:9.2px;color:#4f5b66;"><div style="">PD260200075</div></div>
<div class="c" style="left:269px;top:355px;width:54px;height:48px;justify-content:center;font-size:8.6px;color:#e02020;"><div style="position:relative;top:1px">出库预订单</div></div>
<div class="c" style="left:323px;top:355px;width:74px;height:48px;justify-content:center;font-size:9.5px;color:#4f5b66;"><div style="text-align:center;line-height:11.5px">2026-02-25<br><span style="color:#2e9a2e">2026-02-25</span></div></div>
<div class="c" style="left:397px;top:355px;width:74px;height:48px;justify-content:center;font-size:9.2px;color:#4f5b66;"><div style="">LD040400162</div></div>
<div class="c" style="left:471px;top:355px;width:74px;height:48px;justify-content:center;font-size:9px;color:#333;"><div style="text-align:center;line-height:11.9px;position:relative;top:1.6px">双面背胶青稞纸<br><span style="color:#2424c4">双面背胶青稞纸14<br>8mm * 115mm *<br>0.3mm</span></div></div>
<div class="c" style="left:545px;top:355px;width:55px;height:48px;justify-content:center;font-size:9px;color:#333;"><div style="position:relative;top:1px">月结</div></div>
<div class="c" style="left:599px;top:355px;width:74px;height:48px;justify-content:center;font-size:9.5px;color:#4f5b66;"><div style="text-align:center;line-height:12px">148mm * 115m<br>m * 0.3mm</div></div>
<div class="c" style="left:674px;top:355px;width:73px;height:48px;justify-content:center;font-size:9.5px;color:#4f5b66;"><div style="">0</div></div>
<div class="c" style="left:747px;top:355px;width:36px;height:48px;justify-content:center;font-size:9.5px;color:#4f5b66;letter-spacing:-0.8px"><div style="">PCS</div></div>
<div class="c" style="left:783px;top:355px;width:54px;height:48px;justify-content:center;font-size:9.5px;color:#4f5b66;"><div style="">31340</div></div>
<div class="c" style="left:837px;top:355px;width:56px;height:48px;justify-content:center;font-size:9.5px;color:#4f5b66;"><div style="">0</div></div>
<div class="c" style="left:893px;top:355px;width:55px;height:48px;justify-content:center;font-size:9.5px;color:#4f5b66;"><div style="">0</div></div>
<div class="c" style="left:949px;top:355px;width:35px;height:48px;justify-content:flex-start;font-size:8.85px;color:#d22ad2;overflow:hidden"><div style="position:relative;top:1px">已审待执</div></div>
<b class="cb" style="position:absolute;left:33px;top:421px;width:11px;height:11px;border-color:#8a8a8a;border-radius:1.5px;margin:0"></b>
<div class="c" style="left:397px;top:403px;width:74px;height:47px;justify-content:center;font-size:9.2px;color:#4f5b66;"><div style="">LD040400157</div></div>
<div class="c" style="left:471px;top:403px;width:74px;height:47px;justify-content:center;font-size:9px;color:#333;"><div style="text-align:center;line-height:11.9px;position:relative;top:1.6px">单面背胶青稞纸<br><span style="color:#2424c4">单面背胶青稞纸43<br>0mm * 115mm *<br>0.3mm</span></div></div>
<div class="c" style="left:545px;top:403px;width:55px;height:47px;justify-content:center;font-size:9px;color:#333;"><div style="position:relative;top:1px">月结</div></div>
<div class="c" style="left:599px;top:403px;width:74px;height:47px;justify-content:center;font-size:9.5px;color:#4f5b66;"><div style="text-align:center;line-height:12px">430mm * 115m<br>m * 0.3mm</div></div>
<div class="c" style="left:674px;top:403px;width:73px;height:47px;justify-content:center;font-size:9.5px;color:#4f5b66;"><div style="">0</div></div>
<div class="c" style="left:747px;top:403px;width:36px;height:47px;justify-content:center;font-size:9.5px;color:#4f5b66;letter-spacing:-0.8px"><div style="">PCS</div></div>
<div class="c" style="left:783px;top:403px;width:54px;height:47px;justify-content:center;font-size:9.5px;color:#4f5b66;"><div style="">2000</div></div>
<div class="c" style="left:837px;top:403px;width:56px;height:47px;justify-content:center;font-size:9.5px;color:#4f5b66;"><div style="">0</div></div>
<div class="c" style="left:893px;top:403px;width:55px;height:47px;justify-content:center;font-size:9.5px;color:#4f5b66;"><div style="">0</div></div>
<div class="c" style="left:949px;top:403px;width:35px;height:47px;justify-content:flex-start;font-size:8.85px;color:#d22ad2;overflow:hidden"><div style="position:relative;top:1px">已审待执</div></div>
<b class="cb" style="position:absolute;left:33px;top:469px;width:11px;height:11px;border-color:#8a8a8a;border-radius:1.5px;margin:0"></b>
<div class="c" style="left:397px;top:450px;width:74px;height:48px;justify-content:center;font-size:9.2px;color:#4f5b66;"><div style="">LD040400158</div></div>
<div class="c" style="left:471px;top:450px;width:74px;height:48px;justify-content:center;font-size:9px;color:#333;"><div style="text-align:center;line-height:11.9px;position:relative;top:1.6px">单面背胶青稞纸<br><span style="color:#2424c4">单面背胶青稞纸42<br>0mm * 148mm *<br>0.3mm</span></div></div>
<div class="c" style="left:545px;top:450px;width:55px;height:48px;justify-content:center;font-size:9px;color:#333;"><div style="position:relative;top:1px">月结</div></div>
<div class="c" style="left:599px;top:450px;width:74px;height:48px;justify-content:center;font-size:9.5px;color:#4f5b66;"><div style="text-align:center;line-height:12px">420mm * 148m<br>m * 0.3mm</div></div>
<div class="c" style="left:674px;top:450px;width:73px;height:48px;justify-content:center;font-size:9.5px;color:#4f5b66;"><div style="">0</div></div>
<div class="c" style="left:747px;top:450px;width:36px;height:48px;justify-content:center;font-size:9.5px;color:#4f5b66;letter-spacing:-0.8px"><div style="">PCS</div></div>
<div class="c" style="left:783px;top:450px;width:54px;height:48px;justify-content:center;font-size:9.5px;color:#4f5b66;"><div style="">1000</div></div>
<div class="c" style="left:837px;top:450px;width:56px;height:48px;justify-content:center;font-size:9.5px;color:#4f5b66;"><div style="">0</div></div>
<div class="c" style="left:893px;top:450px;width:55px;height:48px;justify-content:center;font-size:9.5px;color:#4f5b66;"><div style="">0</div></div>
<div class="c" style="left:949px;top:450px;width:35px;height:48px;justify-content:flex-start;font-size:8.85px;color:#d22ad2;overflow:hidden"><div style="position:relative;top:1px">已审待执</div></div>
</body></html>
